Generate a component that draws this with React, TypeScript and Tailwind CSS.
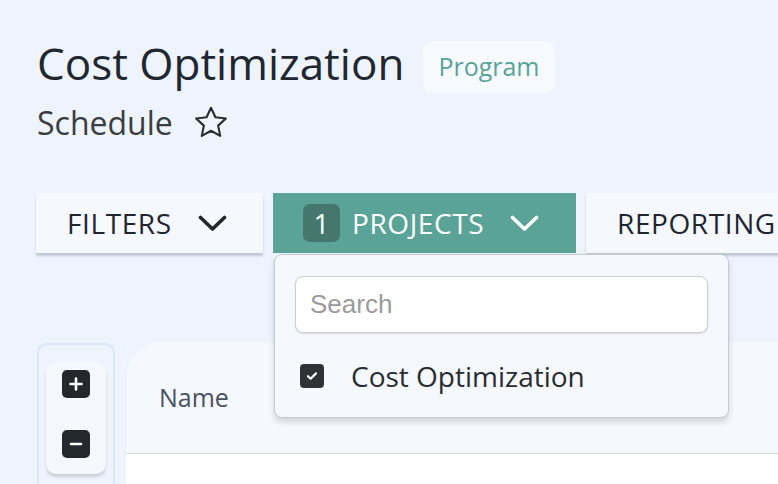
import React from "react";

const Chevron = ({ color }: { color: string }) => (
  <svg width="29" height="17" viewBox="0 0 29 17" fill="none">
    <path d="M2.5 2.5l12 11.5 12-11.5" stroke={color} strokeWidth="3.6" strokeLinecap="round" strokeLinejoin="round" />
  </svg>
);

const Star = () => (
  <svg width="38" height="38" viewBox="0 0 24 24" fill="none">
    <path
      d="M12 2.4l2.8 6 6.6.75-4.9 4.5 1.32 6.5L12 16.9l-5.82 3.25 1.32-6.5-4.9-4.5 6.6-.75z"
      stroke="#2b2e33"
      strokeWidth="1.35"
      strokeLinejoin="round"
    />
  </svg>
);

const App = () => {
  return (
    <div className="relative w-[778px] h-[484px] overflow-hidden bg-[#edf4fe] font-['Open_Sans',sans-serif]">
      <div className="pt-[41px] pl-[37px]">
        <div className="flex items-start h-[52px]">
          <h1 className="text-[44px] leading-[44px] text-[#22262e]">Cost Optimization</h1>
          <span className="ml-[19px] h-[52px] px-[15px] rounded-[10px] bg-[#f6f9fe] text-[#5aa397] text-[25px] flex items-center">
            Program
          </span>
        </div>
        <div className="mt-[12px] flex items-center h-[36px]">
          <span className="text-[32px] leading-[36px] text-[#3b3d40]">Schedule</span>
          <span className="ml-[19px] flex">
            <Star />
          </span>
        </div>
      </div>

      <div className="mt-[52px] pl-[36px] flex gap-[10px] h-[60px]">
        <button className="shrink-0 w-[227px] h-[60px] bg-[#f5f8fe] shadow-[0_3px_2px_rgba(0,0,0,0.18)] flex items-center pl-[31px] text-[28px] tracking-[0.6px] text-[#22262e]">
          FILTERS
          <span className="ml-[26px] flex">
            <Chevron color="#22262e" />
          </span>
        </button>
        <button className="shrink-0 w-[303px] h-[60px] bg-[#5ba397] flex items-center pl-[30px] text-[28px] tracking-[0.6px] text-white">
          <span className="w-[37px] h-[38px] rounded-[7px] bg-[#44776e] flex items-center justify-center tracking-normal">
            1
          </span>
          <span className="ml-[12px]">PROJECTS</span>
          <span className="ml-[26px] flex">
            <Chevron color="#ffffff" />
          </span>
        </button>
        <button className="shrink-0 w-[260px] h-[60px] bg-[#f5f8fe] shadow-[0_3px_2px_rgba(0,0,0,0.18)] flex items-center pl-[31px] text-[28px] tracking-[0.6px] text-[#22262e]">
          REPORTING
        </button>
      </div>

      <div className="mt-[90px] flex">
        <div className="ml-[37px] w-[78px] h-[160px] border-2 border-[#d6e6fb] rounded-t-[10px] bg-[#eef4fd] pt-[17px] px-[7px]">
          <div className="h-[112px] rounded-[10px] bg-[#f5f8fe] shadow-[0_3px_3px_rgba(0,0,0,0.15)] flex flex-col items-center pt-[8px] gap-[32px]">
            <div className="w-[28px] h-[28px] rounded-[5px] bg-[#23272e] flex items-center justify-center">
              <svg width="16" height="16" viewBox="0 0 16 16">
                <path d="M8 2.5v11M2.5 8h11" stroke="#fff" strokeWidth="2.6" strokeLinecap="round" />
              </svg>
            </div>
            <div className="w-[28px] h-[28px] rounded-[5px] bg-[#23272e] flex items-center justify-center">
              <svg width="16" height="16" viewBox="0 0 16 16">
                <path d="M3 8h10" stroke="#fff" strokeWidth="2.6" strokeLinecap="round" />
              </svg>
            </div>
          </div>
        </div>
        <div className="ml-[11px] -mt-[1px] flex-1 flex flex-col">
          <div className="h-[112px] rounded-tl-[36px] bg-[#f5f8fe] flex items-center pl-[33px] border-b border-[#d9dbde] shadow-[0_2px_3px_rgba(0,0,0,0.08)]">
            <span className="text-[25px] text-[#4a5260]">Name</span>
          </div>
          <div className="flex-1 bg-white" />
        </div>
      </div>

      <div className="absolute left-[274px] top-[254px] w-[455px] h-[164px] rounded-[8px] border border-[#c6c9cd] bg-[#f5f8fe] shadow-[0_4px_6px_rgba(0,0,0,0.15)] pt-[21px] px-[20px]">
        <div className="h-[57px] rounded-[8px] border border-[#cdcfd2] bg-white shadow-[0_1px_2px_rgba(0,0,0,0.12)] flex items-center pl-[14px]">
          <span className="font-['Liberation_Sans',Arial,sans-serif] text-[26px] text-[#9b9b9b]">Search</span>
        </div>
        <div className="mt-[22px] flex items-center pl-[5px]">
          <div className="w-[24px] h-[24px] rounded-[4px] bg-[#303236] flex items-center justify-center">
            <svg width="14" height="14" viewBox="0 0 14 14" fill="none">
              <path d="M3 7.2l2.6 2.6L11 4.4" stroke="#fff" strokeWidth="2.2" strokeLinecap="round" strokeLinejoin="round" />
            </svg>
          </div>
          <span className="ml-[27px] text-[28px] text-[#2a2c30]">Cost Optimization</span>
        </div>
      </div>
    </div>
  );
};

export default App;
